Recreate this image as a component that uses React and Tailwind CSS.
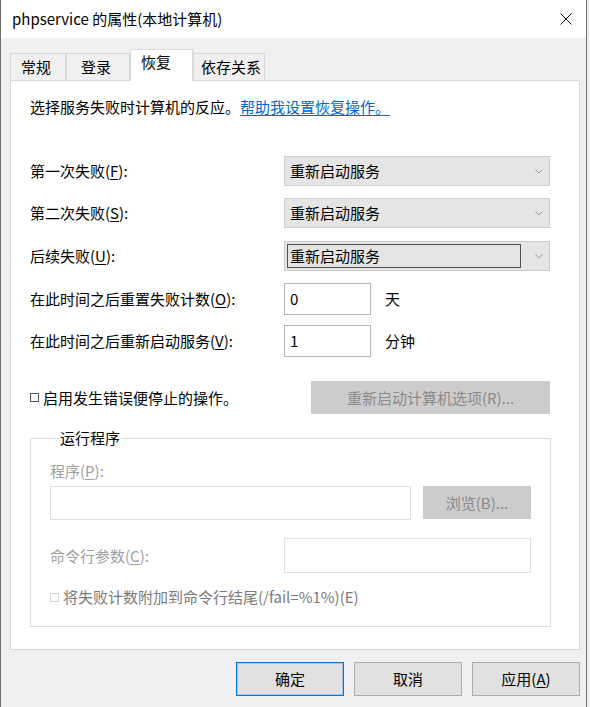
const FONT = { fontFamily: '"Noto Sans CJK SC", "Noto Sans", sans-serif' };

function Key({ children }) {
  return <span className="underline underline-offset-2">{children}</span>;
}

function Chevron() {
  return (
    <svg width="8" height="5" viewBox="0 0 8 5" className="shrink-0">
      <path d="M0.5 0.5 L4 4 L7.5 0.5" fill="none" stroke="#9a9a9a" strokeWidth="1" />
    </svg>
  );
}

function Select({ focused }) {
  return (
    <div className="w-[266px] h-[30px] bg-[#e5e5e5] border border-[#cccccc] flex items-center pl-[2px] pr-[6px]">
      <div
        className={
          "flex-1 h-[24px] flex items-center pl-[2px] mr-[14px] " +
          (focused ? "border border-[#505050]" : "border border-transparent")
        }
      >
        重新启动服务
      </div>
      <Chevron />
    </div>
  );
}

function Row({ label, children, className }) {
  return (
    <div className={"flex items-center " + className}>
      <div className="w-[254px]">{label}</div>
      {children}
    </div>
  );
}

function Tab({ children, className }) {
  return (
    <div className={"h-[27px] flex items-center border border-b-0 border-[#d9d9d9] bg-[#f0f0f0] " + className}>
      {children}
    </div>
  );
}

export default function App() {
  return (
    <div className="w-[590px] h-[707px] bg-[#f0f0f0] text-[15px] leading-[20px] text-black" style={FONT}>
      <div className="w-[587px] h-[707px] border-l border-r border-[#6e6e6e] flex flex-col">
        {/* TITLE BAR */}
        <div className="h-[38px] bg-white flex items-center pl-[11px] pr-[14px]">
          <div className="flex-1 text-[15px]">phpservice 的属性(本地计算机)</div>
          <svg width="12" height="12" viewBox="0 0 12 12">
            <path d="M0.5 0.5 L11.5 11.5 M11.5 0.5 L0.5 11.5" stroke="#111" strokeWidth="1" />
          </svg>
        </div>

        {/* TABS */}
        <div className="mt-[11px] ml-[9px] flex items-end h-[31px]">
          <Tab className="w-[56px] pl-[10px]">常规</Tab>
          <Tab className="w-[64px] pl-[14px]">登录</Tab>
          <div className="w-[63px] h-[32px] -mb-px relative z-10 bg-white border border-b-0 border-[#d9d9d9] pl-[10px] pt-[2px]">
            恢复
          </div>
          <Tab className="w-[72px] pl-[7px]">依存关系</Tab>
        </div>

        {/* PANEL */}
        <div className="ml-[9px] w-[570px] h-[570px] bg-white border border-[#d9d9d9] pl-[19px] flex flex-col">
          <div className="mt-[16px] h-[20px]">
            选择服务失败时计算机的反应。
            <span className="text-[#0066cc] underline underline-offset-2">帮助我设置恢复操作。</span>
          </div>

          <Row className="mt-[39px] h-[30px]" label={<>第一次失败(<Key>F</Key>):</>}>
            <Select />
          </Row>
          <Row className="mt-[12px] h-[30px]" label={<>第二次失败(<Key>S</Key>):</>}>
            <Select />
          </Row>
          <Row className="mt-[13px] h-[30px]" label={<>后续失败(<Key>U</Key>):</>}>
            <Select focused />
          </Row>
          <Row className="mt-[12px] h-[32px]" label={<>在此时间之后重置失败计数(<Key>O</Key>):</>}>
            <div className="w-[87px] h-[32px] border border-[#b5b5b5] flex items-center pl-[5px]">0</div>
            <span className="ml-[14px]">天</span>
          </Row>
          <Row className="mt-[10px] h-[32px]" label={<>在此时间之后重新启动服务(<Key>V</Key>):</>}>
            <div className="w-[87px] h-[32px] border border-[#b5b5b5] flex items-center pl-[5px]">1</div>
            <span className="ml-[14px]">分钟</span>
          </Row>

          {/* STOP ON ERROR */}
          <div className="mt-[24px] w-[520px] h-[33px] flex items-center">
            <span className="w-[9px] h-[9px] border border-[#555] mr-[4px]" />
            <span className="flex-1">启用发生错误便停止的操作。</span>
            <div className="w-[239px] h-[33px] bg-[#cccccc] text-[#8a8a8a] flex items-center justify-center">
              重新启动计算机选项(R)...
            </div>
          </div>

          {/* RUN PROGRAM GROUP */}
          <fieldset className="mt-[14px] w-[521px] h-[199px] border border-[#dcdcdc] pl-[19px] flex flex-col">
            <legend className="ml-[9px] px-[1px] h-[20px]">运行程序</legend>
            <div className="mt-[13px] text-[#a0a0a0]">
              程序(<Key>P</Key>):
            </div>
            <div className="mt-[5px] flex">
              <div className="w-[361px] h-[34px] border border-[#e0e0e0]" />
              <div className="ml-[12px] w-[108px] h-[33px] bg-[#cccccc] text-[#8a8a8a] flex items-center justify-center">
                浏览(B)...
              </div>
            </div>
            <div className="mt-[18px] flex items-center">
              <div className="w-[234px] text-[#a0a0a0]">
                命令行参数(<Key>C</Key>):
              </div>
              <div className="w-[247px] h-[35px] border border-[#e0e0e0]" />
            </div>
            <div className="mt-[14px] flex items-center text-[#7a7a7a]">
              <span className="w-[9px] h-[9px] border border-[#d6d6d6] mr-[4px]" />
              将失败计数附加到命令行结尾(/fail=%1%)(E)
            </div>
          </fieldset>
        </div>

        {/* BUTTONS */}
        <div className="mt-[12px] flex justify-end gap-[10px] pr-[6px]">
          <button className="w-[108px] h-[34px] bg-[#e1e1e1] border border-[#0078d7] shadow-[inset_0_0_0_1px_#9cc8ee]">
            确定
          </button>
          <button className="w-[108px] h-[34px] bg-[#e1e1e1] border border-[#adadad]">取消</button>
          <button className="w-[108px] h-[34px] bg-[#e1e1e1] border border-[#adadad]">
            应用(<Key>A</Key>)
          </button>
        </div>
      </div>
    </div>
  );
}
